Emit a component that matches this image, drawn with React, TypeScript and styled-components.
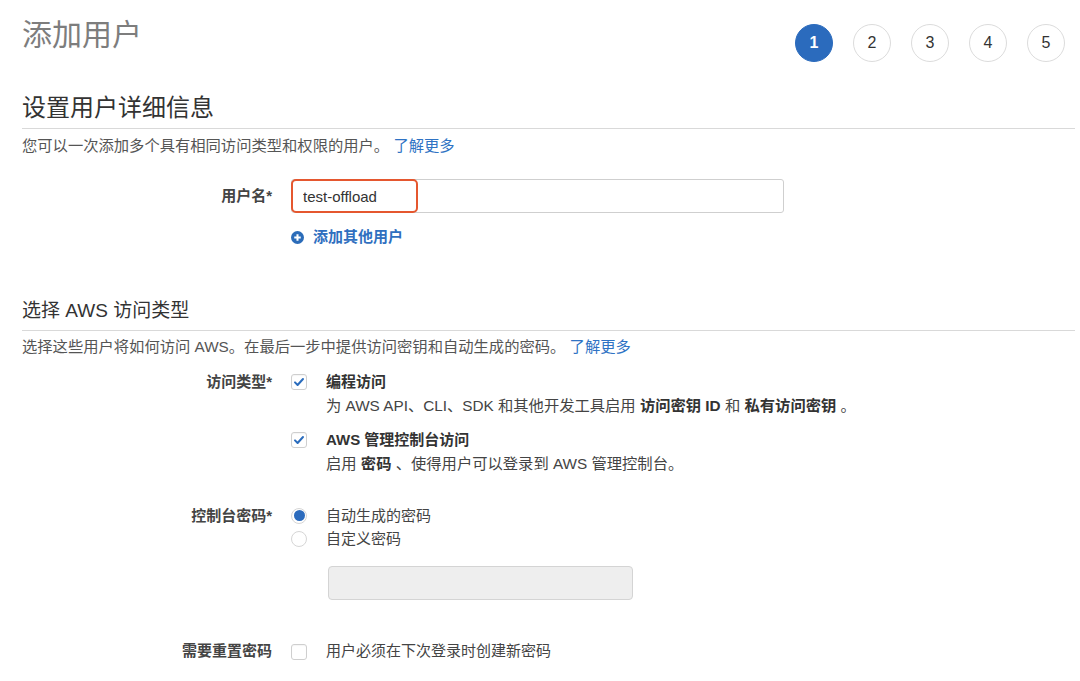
import React from 'react';
import styled, { createGlobalStyle } from 'styled-components';

const GlobalStyle = createGlobalStyle`
    body {
        margin: 0;
        background: #fff;
        font-family: "Liberation Sans", "Noto Sans CJK SC", Arial, sans-serif;
        color: #444;
    }
`;

const steps = [1, 2, 3, 4, 5];

const App = (): JSX.Element => {
    return (
        <Page>
            <GlobalStyle />
            <Header>
                <Title>添加用户</Title>
                <Steps>
                    {steps.map((s) => (
                        <Step key={s} $active={s === 1}>
                            {s}
                        </Step>
                    ))}
                </Steps>
            </Header>

            <SectionTitle $size={24} $pad={5} $top={31}>
                设置用户详细信息
            </SectionTitle>
            <Desc>
                您可以一次添加多个具有相同访问类型和权限的用户。 <Link>了解更多</Link>
            </Desc>

            <FieldRow $top={23}>
                <Label $lh={34}>用户名*</Label>
                <div>
                    <InputWrap>
                        <TextInput defaultValue="test-offload" />
                        <Highlight />
                    </InputWrap>
                </div>
            </FieldRow>
            <FieldRow $top={15}>
                <span />
                <AddLink>
                    <svg width="13" height="13" viewBox="0 0 14 14">
                        <circle cx="7" cy="7" r="7" fill="#2b6cb9" />
                        <path d="M7 3.5v7M3.5 7h7" stroke="#fff" strokeWidth="2.2" />
                    </svg>
                    添加其他用户
                </AddLink>
            </FieldRow>

            <SectionTitle $size={19} $pad={7} $top={53}>
                选择 AWS 访问类型
            </SectionTitle>
            <Desc $top={6}>
                选择这些用户将如何访问 AWS。在最后一步中提供访问密钥和自动生成的密码。 <Link>了解更多</Link>
            </Desc>

            <FieldRow $top={13}>
                <Label $lh={24}>访问类型*</Label>
                <OptionList $gap={10}>
                    <Option>
                        <Checkbox $checked>
                            <CheckMark />
                        </Checkbox>
                        <OptionText>
                            <Strong>编程访问</Strong>
                            <Hint>
                                为 AWS API、CLI、SDK 和其他开发工具启用 <Strong>访问密钥 ID</Strong> 和{' '}
                                <Strong>私有访问密钥</Strong> 。
                            </Hint>
                        </OptionText>
                    </Option>
                    <Option>
                        <Checkbox $checked>
                            <CheckMark />
                        </Checkbox>
                        <OptionText>
                            <Strong>AWS 管理控制台访问</Strong>
                            <Hint>
                                启用 <Strong>密码</Strong> 、使得用户可以登录到 AWS 管理控制台。
                            </Hint>
                        </OptionText>
                    </Option>
                </OptionList>
            </FieldRow>

            <FieldRow $top={28}>
                <Label $lh={23}>控制台密码*</Label>
                <div>
                    <RadioOption>
                        <Radio $checked />
                        <span>自动生成的密码</span>
                    </RadioOption>
                    <RadioOption>
                        <Radio />
                        <span>自定义密码</span>
                    </RadioOption>
                    <DisabledInput disabled />
                </div>
            </FieldRow>

            <FieldRow $top={40}>
                <Label $lh={22}>需要重置密码</Label>
                <Option $lh={22}>
                    <Checkbox />
                    <span>用户必须在下次登录时创建新密码</span>
                </Option>
            </FieldRow>
        </Page>
    );
};

const CheckMark = () => (
    <svg width="12" height="12" viewBox="0 0 12 12">
        <path d="M2 6.4l2.6 2.6L10 3" fill="none" stroke="#2a6cbd" strokeWidth="2" strokeLinecap="round" strokeLinejoin="round" />
    </svg>
);

const Page = styled.div`
    padding: 0 5px 20px 22px;
    font-size: 15px;
`;

const Header = styled.div`
    display: flex;
    justify-content: space-between;
    align-items: flex-start;
`;

const Title = styled.h1`
    margin: 15px 0 0;
    font-size: 30px;
    line-height: 40px;
    font-weight: normal;
    color: #7d7d7d;
`;

const Steps = styled.div`
    display: flex;
    gap: 20px;
    margin-top: 24px;
    margin-right: 10px;
`;

const Step = styled.div<{ $active?: boolean }>`
    width: 38px;
    height: 38px;
    box-sizing: border-box;
    border-radius: 50%;
    display: flex;
    align-items: center;
    justify-content: center;
    font-size: 16px;
    font-weight: ${(p) => (p.$active ? 'bold' : 'normal')};
    color: ${(p) => (p.$active ? '#fff' : '#333')};
    background: ${(p) => (p.$active ? '#2b6bbd' : '#fff')};
    border: 1px solid ${(p) => (p.$active ? '#2b6bbd' : '#dcdcdc')};
`;

const SectionTitle = styled.h2<{ $size: number; $pad: number; $top: number }>`
    margin: ${(p) => p.$top}px 0 0;
    font-size: ${(p) => p.$size}px;
    line-height: ${(p) => (p.$size === 24 ? 30 : 24)}px;
    font-weight: normal;
    color: #333;
    padding-bottom: ${(p) => p.$pad}px;
    border-bottom: 1px solid #d9d9d9;
`;

const Desc = styled.p<{ $top?: number }>`
    margin: ${(p) => p.$top ?? 7}px 0 0;
    font-size: 15.3px;
    line-height: 20px;
    color: #555;
`;

const Link = styled.a`
    color: #2f73c4;
    cursor: pointer;
`;

const FieldRow = styled.div<{ $top: number }>`
    display: grid;
    grid-template-columns: 250px 1fr;
    column-gap: 19px;
    margin-top: ${(p) => p.$top}px;
`;

const Label = styled.div<{ $lh: number }>`
    text-align: right;
    font-weight: bold;
    color: #444;
    font-size: 15px;
    line-height: ${(p) => p.$lh}px;
`;

const InputWrap = styled.div`
    position: relative;
    width: 493px;
`;

const TextInput = styled.input`
    width: 100%;
    height: 34px;
    box-sizing: border-box;
    border: 1px solid #cfcfcf;
    border-radius: 3px;
    padding: 0 11px;
    font-family: inherit;
    font-size: 15px;
    color: #333;
    outline: none;
`;

const Highlight = styled.div`
    position: absolute;
    left: 0;
    top: 0;
    width: 127px;
    height: 34px;
    box-sizing: border-box;
    border: 2px solid #e5572f;
    border-radius: 5px;
    pointer-events: none;
`;

const AddLink = styled.a`
    display: flex;
    align-items: center;
    gap: 9px;
    line-height: 18px;
    font-size: 15px;
    font-weight: bold;
    color: #2f6fbf;
    cursor: pointer;
`;

const OptionList = styled.div<{ $gap: number }>`
    display: flex;
    flex-direction: column;
    gap: ${(p) => p.$gap}px;
`;

const Option = styled.div<{ $lh?: number }>`
    display: flex;
    align-items: flex-start;
    gap: 19px;
    line-height: ${(p) => p.$lh ?? 24}px;
    color: #444;
`;

const OptionText = styled.div`
    display: flex;
    flex-direction: column;
`;

const Strong = styled.b`
    color: #333;
`;

const Hint = styled.span`
    color: #444;
    font-size: 15.3px;
`;

const Checkbox = styled.span<{ $checked?: boolean }>`
    flex: none;
    width: 16px;
    height: 16px;
    margin-top: 4px;
    box-sizing: border-box;
    border: 1px solid #cfcfcf;
    border-radius: 3px;
    background: #fff;
    display: flex;
    align-items: center;
    justify-content: center;
    box-shadow: inset 0 1px 1px rgba(0, 0, 0, 0.04);
`;

const RadioOption = styled.div`
    display: flex;
    align-items: center;
    gap: 19px;
    line-height: 23px;
    color: #444;
`;

const Radio = styled.span<{ $checked?: boolean }>`
    flex: none;
    width: 16px;
    height: 16px;
    box-sizing: border-box;
    border-radius: 50%;
    border: 1px solid #d6d6d6;
    background: #fff;
    display: flex;
    align-items: center;
    justify-content: center;
    &::after {
        content: '';
        display: ${(p) => (p.$checked ? 'block' : 'none')};
        width: 11px;
        height: 11px;
        border-radius: 50%;
        background: #2b6bbd;
    }
`;

const DisabledInput = styled.input`
    display: block;
    margin: 16px 0 0 37px;
    width: 305px;
    height: 34px;
    box-sizing: border-box;
    border: 1px solid #d4d4d4;
    border-radius: 4px;
    background: #eee;
`;

export default App;
